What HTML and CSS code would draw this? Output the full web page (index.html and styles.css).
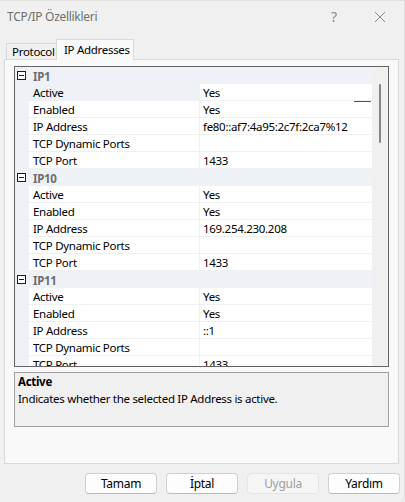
FILE: index.html
```html
<!DOCTYPE html>
<html lang="tr">
<head>
<meta charset="utf-8">
<title>TCP/IP Özellikleri</title>
<link rel="stylesheet" href="styles.css">
</head>
<body>
<div class="window">
  <div class="titlebar">
    <span class="title">TCP/IP Özellikleri</span>
    <span class="tb-btn help">?</span>
    <span class="tb-btn close">
      <svg width="12" height="12" viewBox="0 0 12 12"><path d="M1 1 L11 11 M11 1 L1 11" stroke="#8a8a8a" stroke-width="1" fill="none"/></svg>
    </span>
  </div>
  <div class="tabs">
    <div class="tab">Protocol</div>
    <div class="tab active">IP Addresses</div>
  </div>
  <div class="panel">
    <div class="grid">
      <div class="rows">
        <div class="cat"><span class="toggle"></span><span class="cat-name">IP1</span></div>
        <div class="prop selected"><span class="name">Active</span><span class="val">Yes</span></div>
        <div class="prop"><span class="name">Enabled</span><span class="val">Yes</span></div>
        <div class="prop"><span class="name">IP Address</span><span class="val">fe80::af7:4a95:2c7f:2ca7%12</span></div>
        <div class="prop"><span class="name">TCP Dynamic Ports</span><span class="val"></span></div>
        <div class="prop"><span class="name">TCP Port</span><span class="val">1433</span></div>
        <div class="cat"><span class="toggle"></span><span class="cat-name">IP10</span></div>
        <div class="prop"><span class="name">Active</span><span class="val">Yes</span></div>
        <div class="prop"><span class="name">Enabled</span><span class="val">Yes</span></div>
        <div class="prop"><span class="name">IP Address</span><span class="val">169.254.230.208</span></div>
        <div class="prop"><span class="name">TCP Dynamic Ports</span><span class="val"></span></div>
        <div class="prop"><span class="name">TCP Port</span><span class="val">1433</span></div>
        <div class="cat"><span class="toggle"></span><span class="cat-name">IP11</span></div>
        <div class="prop"><span class="name">Active</span><span class="val">Yes</span></div>
        <div class="prop"><span class="name">Enabled</span><span class="val">Yes</span></div>
        <div class="prop"><span class="name">IP Address</span><span class="val">::1</span></div>
        <div class="prop"><span class="name">TCP Dynamic Ports</span><span class="val"></span></div>
        <div class="prop"><span class="name">TCP Port</span><span class="val">1433</span></div>
      </div>
      <div class="scrollbar"><div class="thumb"></div></div>
      <div class="caret-line"></div>
    </div>
    <div class="helpbox">
      <div class="help-title">Active</div>
      <div class="help-text">Indicates whether the selected IP Address is active.</div>
    </div>
  </div>
  <div class="buttons">
    <button class="btn">Tamam</button>
    <button class="btn">İptal</button>
    <button class="btn disabled">Uygula</button>
    <button class="btn">Yardım</button>
  </div>
</div>
</body>
</html>
```
FILE: styles.css
```css
* { box-sizing: border-box; }
html, body {
  margin: 0;
  padding: 0;
  background: #f0f0f0;
}
body {
  font-family: "Noto Sans", "Open Sans", sans-serif;
  font-size: 11.5px;
  letter-spacing: -0.3px;
  color: #000;
}
.window {
  width: 405px;
  height: 502px;
  background: #f0f0f0;
  border-top: 1px solid #e2e2e2;
  border-right: 1px solid #dcdcdc;
  border-radius: 0 0 6px 6px;
  display: flex;
  flex-direction: column;
  overflow: hidden;
}
.titlebar {
  height: 31px;
  display: flex;
  align-items: center;
  padding-left: 7px;
  color: #6f6f6f;
  font-size: 12px;
}
.title { flex: 1; letter-spacing: -0.3px; }
.tb-btn {
  width: 46px;
  display: flex;
  justify-content: center;
  color: #8a8a8a;
}
.help { font-size: 14px; }
.close { width: 46px; margin-right: 1px; }
.tabs {
  height: 27px;
  display: flex;
  align-items: flex-end;
  padding-left: 6px;
}
.tab {
  flex: 0 0 auto;
  white-space: nowrap;
  height: 16px;
  width: 51px;
  padding: 0 0 0 5px;
  border: 1px solid #d9d9d9;
  border-bottom: none;
  border-right: none;
  background: #f0f0f0;
  line-height: 15px;
  color: #000;
  overflow: hidden;
}
.tab.active {
  width: 78px;
  height: 21px;
  margin-left: -1px;
  padding: 2px 0 0 7px;
  border-right: 1px solid #d9d9d9;
  background: #f9f9f9;
  margin-bottom: -1px;
  position: relative;
  z-index: 1;
}
.panel {
  margin: 0 5px 0 4px;
  height: 405px;
  border: 1px solid #d9d9d9;
  background: #f9f9f9;
  padding: 6px 9px 0 9px;
  display: flex;
  flex-direction: column;
}
.grid {
  height: 301px;
  border: 1px solid #646464;
  display: flex;
  position: relative;
  background: #f0f0f0;
}
.rows {
  flex: 1;
  overflow: hidden;
  background: #eef2f7;
}
.cat, .prop {
  height: 17px;
  display: flex;
  align-items: center;
}
.cat {
  background: #eef2f7;
  position: relative;
}
.toggle {
  width: 9px;
  height: 9px;
  border: 1px solid #1e1e1e;
  margin-left: 2px;
  margin-right: 7px;
  position: relative;
  background: #fff;
}
.toggle::after {
  content: "";
  position: absolute;
  left: 1px;
  right: 1px;
  top: 3px;
  height: 1px;
  background: #1e1e1e;
}
.cat-name {
  font-weight: bold;
  color: #6d6d6d;
  padding-top: 1px;
}
.prop {
  margin-left: 14px;
  background: #fff;
  border-bottom: 1px solid #f0f0f0;
}
.prop .name {
  width: 171px;
  height: 100%;
  padding: 2px 0 0 4px;
  border-right: 1px solid #f0f0f0;
  line-height: 14px;
}
.prop.selected .name { background: #eef2f7; }
.prop .val {
  flex: 1;
  height: 100%;
  padding: 2px 0 0 3px;
  line-height: 14px;
}
.scrollbar {
  width: 16px;
  background: #f0f0f0;
  padding-top: 17px;
  display: flex;
  justify-content: center;
}
.thumb {
  width: 2px;
  height: 59px;
  background: #858585;
  border-radius: 1px;
}
.caret-line {
  position: absolute;
  left: 339px;
  top: 34px;
  width: 17px;
  height: 1px;
  background: #555;
}
.helpbox {
  margin-top: 5px;
  height: 55px;
  border: 1px solid #a0a0a0;
  background: #f0f0f0;
  padding: 1px 3px;
}
.help-title {
  font-weight: bold;
  line-height: 16px;
}
.help-text {
  line-height: 17px;
}
.buttons {
  display: flex;
  justify-content: flex-end;
  gap: 9px;
  padding: 9px 4px 0 0;
}
.btn {
  width: 72px;
  height: 21px;
  background: #fdfdfd;
  border: 1px solid #d0d0d0;
  border-bottom-color: #bcbcbc;
  border-radius: 4px;
  font-family: "Noto Sans", "Open Sans", sans-serif;
  font-size: 12px;
  color: #000;
  padding: 0;
  line-height: 17px;
  letter-spacing: -0.3px;
}
.btn.disabled {
  background: #f5f5f5;
  border-color: #e5e5e5;
  color: #a0a0a0;
}
```
